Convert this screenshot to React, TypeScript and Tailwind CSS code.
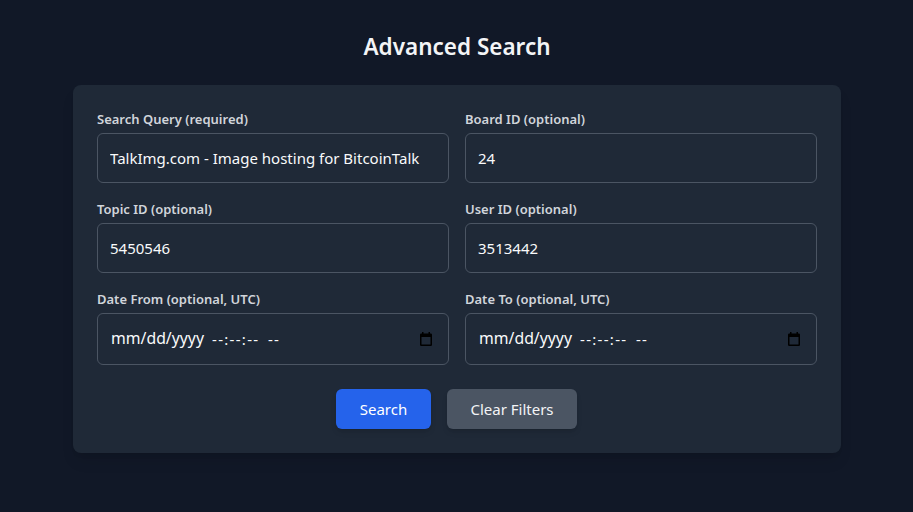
function CalendarIcon() {
  return (
    <svg width="12" height="14" viewBox="0 0 12 14" className="shrink-0 text-black" aria-hidden="true">
      <path fill="currentColor" d="M2 0h1.500v1.500h5V0H10v1.500h.8A1.200 1.200 0 0 1 12 2.700v10.100a1.200 1.200 0 0 1-1.200 1.200H1.200A1.200 1.200 0 0 1 0 12.800V2.700a1.200 1.200 0 0 1 1.200-1.200H2z" />
      <rect x="1.500" y="5" width="9" height="7.500" fill="#1f2937" />
    </svg>
  );
}

function DateField({ label }: { label: string }) {
  return (
    <div>
      <label className="mb-1 block text-[13px] leading-5 font-semibold text-[#d1d5db]">{label}</label>
      <div className="flex h-[52px] items-center rounded-md border border-[#4b5563] bg-[#1f2937] pr-4 pl-[13px] text-[15.8px] text-[#f9fafb]">
        <span className="w-[101px]">mm/dd/yyyy</span>
        <span className="w-[56px] text-[15px] tracking-[1.3px]">--:--:--</span>
        <span className="flex-1 text-[15px] tracking-[1.2px]">--</span>
        <CalendarIcon />
      </div>
    </div>
  );
}

function TextField({ label, value }: { label: string; value: string }) {
  return (
    <div>
      <label className="mb-1 block text-[13px] leading-5 font-semibold text-[#d1d5db]">{label}</label>
      <input
        type="text"
        defaultValue={value}
        className="h-[50px] w-full rounded-md border border-[#4b5563] bg-[#1f2937] px-3 text-[15px] text-[#f9fafb]"
      />
    </div>
  );
}

export default function App() {
  return (
    <div className="min-h-[512px] bg-[#111827] pt-[31px] pl-[73px] font-['Noto_Sans','Open_Sans',sans-serif] text-white">
      <div className="w-[768px]">
        <h1 className="mb-[22px] text-center text-[22.5px] leading-8 font-semibold text-[#f3f4f6]">Advanced Search</h1>
        <form className="rounded-lg bg-[#1f2937] p-6 shadow-lg">
          <div className="grid grid-cols-2 gap-4">
            <TextField label="Search Query (required)" value="TalkImg.com - Image hosting for BitcoinTalk" />
            <TextField label="Board ID (optional)" value="24" />
            <TextField label="Topic ID (optional)" value="5450546" />
            <TextField label="User ID (optional)" value="3513442" />
            <DateField label="Date From (optional, UTC)" />
            <DateField label="Date To (optional, UTC)" />
          </div>
          <div className="mt-6 flex justify-center gap-4 pr-[2px]">
            <button type="button" className="h-10 w-[95px] rounded-md bg-[#2563eb] pl-px text-[15px] text-white shadow-md">Search</button>
            <button type="button" className="h-10 w-[130px] rounded-md bg-[#4b5563] pl-px text-[15px] text-[#f3f4f6] shadow-md">Clear Filters</button>
          </div>
        </form>
      </div>
    </div>
  );
}
